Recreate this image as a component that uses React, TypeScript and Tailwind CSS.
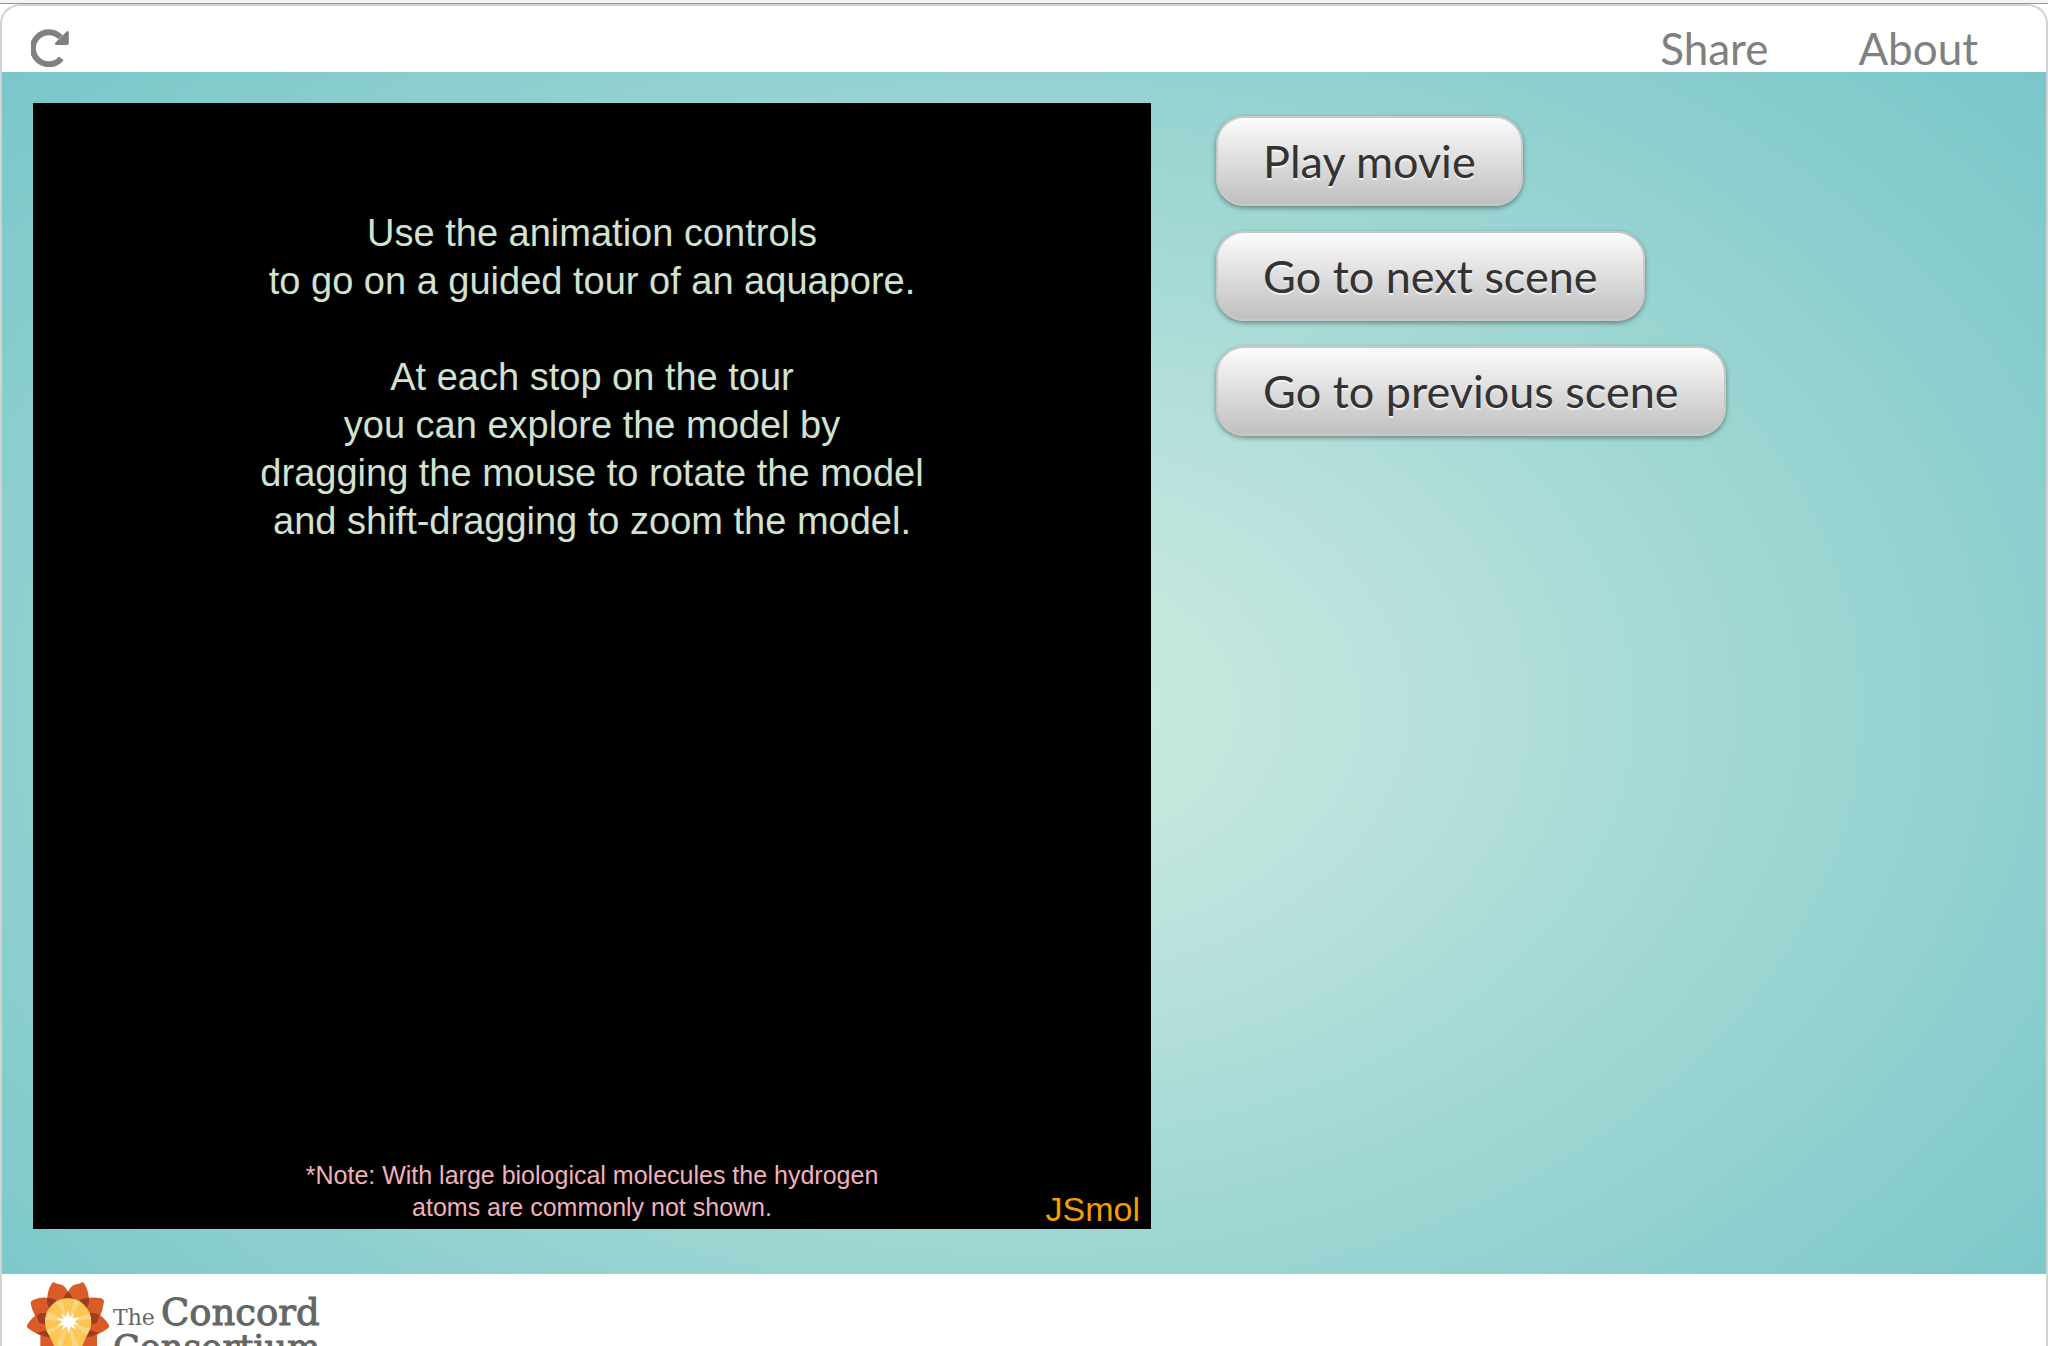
const scenes = ["Play movie", "Go to next scene", "Go to previous scene"];

function ReloadIcon() {
  return (
    <svg viewBox="0 0 38 38" className="size-[38px]" fill="none" aria-hidden="true">
      <path d="M30.3 29.3A16 16 0 1 1 29.5 8.3" stroke="#808080" strokeWidth="6" />
      <path
        d="M35.6 2.4L24.2 13.8Q23.2 15.6 25 16H36.4Q37.8 16 37.8 14.6V3.2Q37.2 1.2 35.6 2.4Z"
        fill="#808080"
      />
    </svg>
  );
}

function FlowerBulb() {
  return (
    <svg viewBox="20 36 246 246" className="size-[82px] shrink-0" aria-hidden="true">
      <g fill="#da5b27">
        <path d="M80 88Q82 56 96 38Q100 35 106 40L128 46Q146 60 156 100L143 160L90 130Z" />
        <path d="M206 88Q204 56 190 38Q186 35 180 40L158 46Q140 60 130 100L143 160L196 130Z" />
        <path d="M50 148Q34 120 31 98Q32 91 40 89Q66 78 92 86L110 160L70 160Z" />
        <path d="M236 148Q248 122 251 94Q250 87 242 85Q214 80 194 86L176 160L216 160Z" />
        <path d="M60 196Q32 184 20 172Q18 168 22 162Q36 140 58 129L90 160L80 200Z" />
        <path d="M226 196Q254 184 266 172Q268 168 264 162Q250 140 228 129L196 160L206 200Z" />
        <path d="M60 190L60 230Q66 262 90 262H196Q222 262 230 230L230 190Z" />
      </g>
      <g fill="#9a3d21">
        <path d="M143 64Q131 76 127 92H159Q155 76 143 64Z" />
        <path d="M80 84Q78 100 86 116L110 92Q96 82 80 84Z" />
        <path d="M206 84Q208 100 200 116L176 92Q190 82 206 84Z" />
        <path d="M50 134Q50 148 56 158L80 166V130Q64 126 50 134Z" />
        <path d="M236 134Q236 148 230 158L206 166V130Q222 126 236 134Z" />
        <path d="M50 190Q70 180 84 182L92 204Q70 200 50 190Z" />
        <path d="M236 190Q216 180 202 182L194 204Q216 200 236 190Z" />
      </g>
      <path
        d="M143 85C104 85 74 117 74 156C74 190 102 206 108 262H180C184 206 213 190 213 156C213 117 182 85 143 85Z"
        fill="#fdc553"
      />
      <g fill="#f4d77e">
        <path d="M143 156L108 96L124 88Z" />
        <path d="M143 156L163 88L178 95Z" />
        <path d="M143 156L207 128L212 146Z" />
        <path d="M143 156L210 176L198 194Z" />
        <path d="M143 156L176 226L158 240Z" />
        <path d="M143 156L124 240L108 222Z" />
        <path d="M143 156L86 194L78 180Z" />
        <path d="M143 156L75 148L82 124Z" />
      </g>
      <path
        d="M143 121L148 142L162 128L156 145L179 142L162 155L176 164L159 163L166 180L151 169L145 190L139 169L123 181L130 165L110 167L126 156L108 144L130 146L121 129L137 142Z"
        fill="#fff"
      />
    </svg>
  );
}

export default function App() {
  return (
    <div className="flex h-screen flex-col overflow-hidden bg-white font-[Lato,sans-serif]">
      <div className="h-1 shrink-0 border-b border-[#969696] bg-[#f3f3f3]" />
      <div className="flex-1 rounded-t-[20px] border-2 border-b-0 border-[#d0d3d3]">
        <header className="flex h-[66px] items-center justify-between pl-[29px] pr-[68px] text-[#808080]">
          <button type="button" aria-label="Reload" className="pt-[18px]">
            <ReloadIcon />
          </button>
          <nav className="flex gap-[90px] pt-[18px] text-[44px] leading-[44px]">
            <a href="#share">Share</a>
            <a href="#about">About</a>
          </nav>
        </header>

        <main className="grid grid-cols-[22fr_17fr] items-start bg-[radial-gradient(72%_86%_at_50%_53%,#d0ece0_0%,#b6e0db_29%,#9fd7d3_50%,#8dcfce_70%,#73c3c9_100%)] px-[31px] pb-[45px] pt-[31px]">
          <section className="flex aspect-[1118/1126] flex-col items-center justify-between bg-black px-[11px] pt-[106px] text-center font-['Liberation_Sans',Arial,sans-serif]">
            <div className="text-[38px] leading-[48px] text-[#d2e2d0]">
              <p>
                Use the animation controls
                <br />
                to go on a guided tour of an aquapore.
              </p>
              <p className="mt-12">
                At each stop on the tour
                <br />
                you can explore the model by
                <br />
                dragging the mouse to rotate the model
                <br />
                and shift-dragging to zoom the model.
              </p>
            </div>
            <div className="grid w-full grid-cols-[1fr_auto_1fr] items-end">
              <p className="col-start-2 pb-1.5 text-[25px] leading-8 text-[#f0b1bd]">
                *Note: With large biological molecules the hydrogen
                <br />
                atoms are commonly not shown.
              </p>
              <span className="text-right text-[34px] leading-[40px] text-[#f59e00]">JSmol</span>
            </div>
          </section>

          <div className="flex flex-col items-start gap-[25px] pl-[65px] pt-[13px]">
            {scenes.map((label) => (
              <button
                key={label}
                type="button"
                className="h-[90px] rounded-[28px] border-2 border-[#c8c8c8] bg-linear-to-b from-[#fcfcfc] to-[#c0c0c0] px-[45px] text-[45px] leading-[60px] text-[#333] shadow-[0_2px_5px_rgba(0,0,0,0.4)] [text-shadow:0_2px_0_rgba(255,255,255,0.7)]"
              >
                {label}
              </button>
            ))}
          </div>
        </main>

        <footer className="flex gap-1 pl-[25px] pt-2">
          <FlowerBulb />
          <div className="pt-4 font-['DejaVu_Serif',serif] leading-[30px] text-[#666]">
            <p className="flex items-baseline gap-1.5">
              <span className="text-[22px]">The</span>
              <span className="text-[37px] [-webkit-text-stroke:1px_#666]">Concord</span>
            </p>
            <p className="text-[35px] [-webkit-text-stroke:1px_#666]">Consortium</p>
          </div>
        </footer>
      </div>
    </div>
  );
}
